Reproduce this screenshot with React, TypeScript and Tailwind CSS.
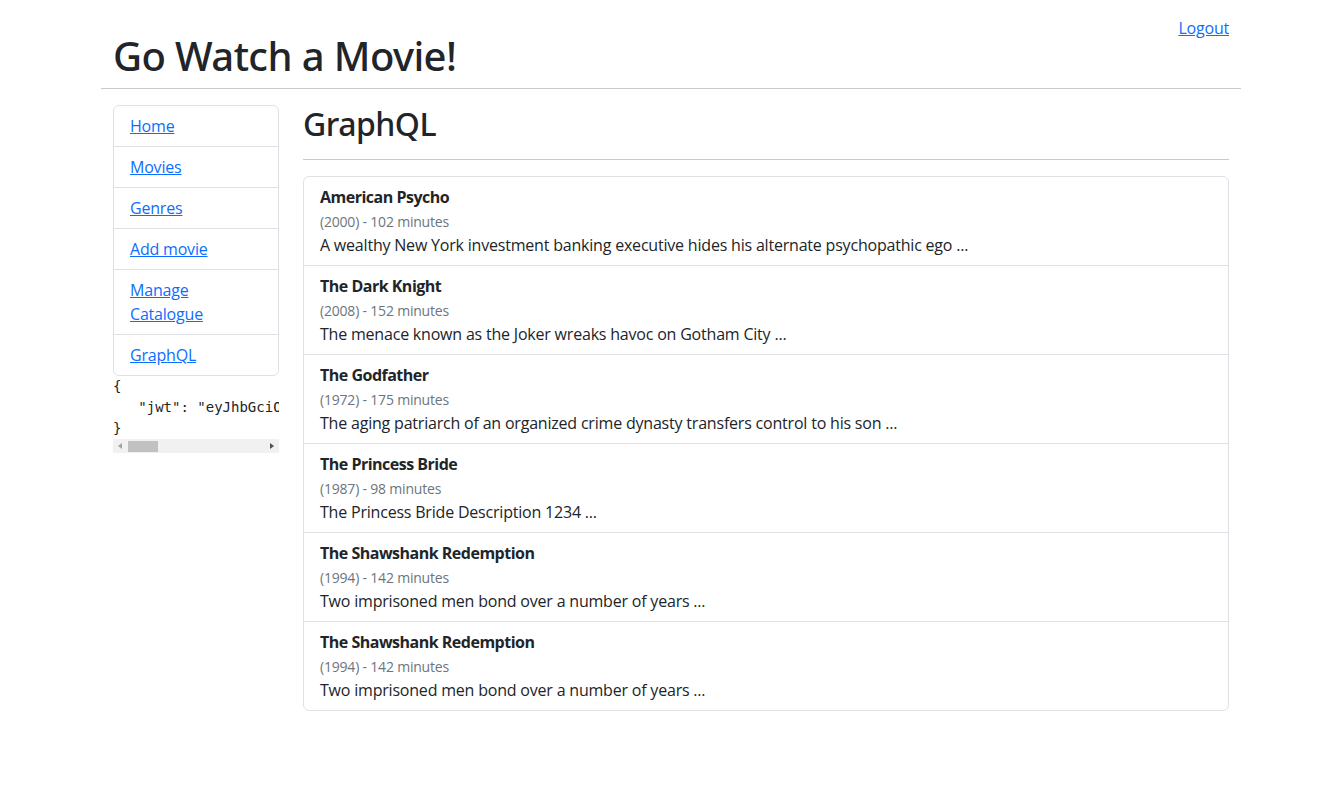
const MOVIES = [
  { title: "American Psycho", year: 2000, runtime: 102, desc: "A wealthy New York investment banking executive hides his alternate psychopathic ego ..." },
  { title: "The Dark Knight", year: 2008, runtime: 152, desc: "The menace known as the Joker wreaks havoc on Gotham City ..." },
  { title: "The Godfather", year: 1972, runtime: 175, desc: "The aging patriarch of an organized crime dynasty transfers control to his son ..." },
  { title: "The Princess Bride", year: 1987, runtime: 98, desc: "The Princess Bride Description 1234 ..." },
  { title: "The Shawshank Redemption", year: 1994, runtime: 142, desc: "Two imprisoned men bond over a number of years ..." },
  { title: "The Shawshank Redemption", year: 1994, runtime: 142, desc: "Two imprisoned men bond over a number of years ..." },
];

const NAV = ["Home", "Movies", "Genres", "Add movie", "Manage Catalogue", "GraphQL"];

export default function App() {
  return (
    <div className="min-h-screen bg-white text-[#212529] text-base leading-6 tracking-[-0.2px] [font-family:'Open_Sans',sans-serif]">
      <div className="mx-auto w-[1140px]">
        {/* header */}
        <div className="flex items-start justify-between px-3">
          <h1 className="mt-8 mb-2 text-[40px] leading-[48px] font-medium tracking-[-0.6px] [font-family:'Noto_Sans',sans-serif]">
            Go Watch a Movie!
          </h1>
          <a href="#" className="mt-4 text-[#0d6efd] underline">
            Logout
          </a>
        </div>
        <hr className="mb-4 border-[#c8c9ca]" />

        <div className="flex">
          {/* sidebar */}
          <div className="w-[190px] shrink-0 px-3">
            <nav className="flex flex-col rounded-md border border-[#dee2e6]">
              {NAV.map((n, i) => (
                <div
                  key={n}
                  className={`px-4 py-2 ${i < NAV.length - 1 ? "border-b border-[#dee2e6]" : ""}`}
                >
                  <a href="#" className="text-[#0d6efd] underline">
                    {n}
                  </a>
                </div>
              ))}
            </nav>
            <pre className="overflow-hidden whitespace-pre text-[14px] leading-[21px] tracking-normal [font-family:'DejaVu_Sans_Mono',monospace]">
              {'{\n   "jwt": "eyJhbGciOiJIUzI1NiIsInR5cCI6IkpXVCJ9"\n}'}
            </pre>
            <div className="flex h-[14px] items-center bg-[#f1f1f1]">
              <svg width="15" height="14" viewBox="0 0 15 14" className="shrink-0">
                <path d="M5 7 L9 4 L9 10 Z" fill="#a3a3a3" />
              </svg>
              <div className="h-[11px] w-[30px] bg-[#c1c1c1]" />
              <div className="flex-1" />
              <svg width="15" height="14" viewBox="0 0 15 14" className="shrink-0">
                <path d="M10 7 L6 4 L6 10 Z" fill="#505050" />
              </svg>
            </div>
          </div>

          {/* main */}
          <div className="w-[950px] shrink-0 px-3">
            <h2 className="text-[32px] leading-[38.4px] font-medium tracking-[-0.5px] [font-family:'Noto_Sans',sans-serif]">
              GraphQL
            </h2>
            <hr className="my-4 border-[#c8c9ca]" />
            <div className="flex flex-col rounded-md border border-[#dee2e6]">
              {MOVIES.map((m, i) => (
                <div
                  key={i}
                  className={`px-4 py-2 ${i < MOVIES.length - 1 ? "border-b border-[#dee2e6]" : ""}`}
                >
                  <div className="h-6 font-bold tracking-[-0.5px]">{m.title}</div>
                  <div className="h-6 overflow-hidden text-[14px] leading-[26px] text-[#6c757d]">
                    ({m.year}) - {m.runtime} minutes
                  </div>
                  <div className="h-6">{m.desc}</div>
                </div>
              ))}
            </div>
          </div>
        </div>
      </div>
    </div>
  );
}
